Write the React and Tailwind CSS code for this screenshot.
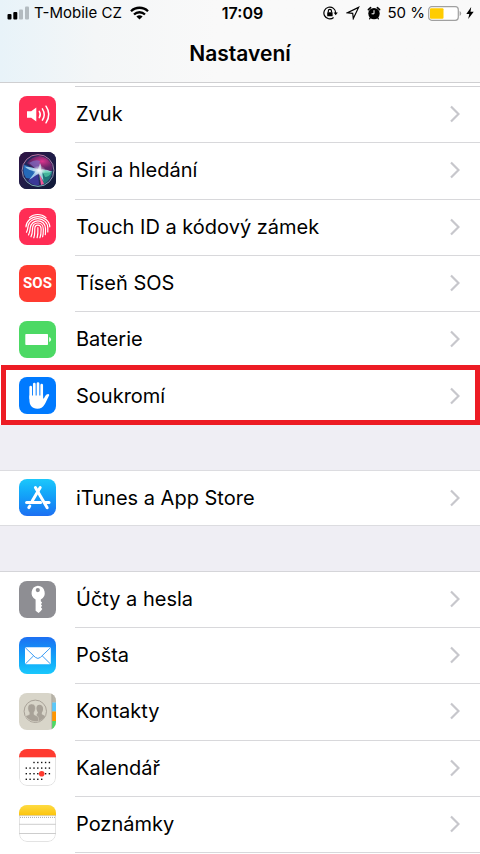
import clsx from 'clsx'

const PRIMARY = [
  { label: 'Zvuk', icon: SoundIcon },
  { label: 'Siri a hledání', icon: SiriIcon },
  { label: 'Touch ID a kódový zámek', icon: TouchIdIcon },
  { label: 'Tíseň SOS', icon: SosIcon },
  { label: 'Baterie', icon: BatteryIcon },
  { label: 'Soukromí', icon: PrivacyIcon, highlighted: true },
]

const STORE = [{ label: 'iTunes a App Store', icon: AppStoreIcon }]

const APPS = [
  { label: 'Účty a hesla', icon: KeyIcon },
  { label: 'Pošta', icon: MailIcon },
  { label: 'Kontakty', icon: ContactsIcon },
  { label: 'Kalendář', icon: CalendarIcon },
  { label: 'Poznámky', icon: NotesIcon },
]

export default function App() {
  return (
    <div className="min-h-screen bg-[#efeef4] font-['Inter','Noto_Sans',sans-serif] text-black">
      <header className="border-b border-[#cfcfd1] bg-[#f9f9f9] bg-linear-to-r from-[#e8f3f9] via-[#f4f6f7] via-20% to-[#f9f9f9] to-45%">
        <StatusBar />
        <h1 className="pt-[15px] pb-3.5 text-center text-[21px] leading-7 font-semibold">Nastavení</h1>
      </header>

      <main className="flex flex-col gap-[45px]">
        <div className="bg-white pt-[3px]">
          <div className="ml-[75px] border-t border-[#d2d2d5]" />
          <List items={PRIMARY} className="min-h-[338px]" />
        </div>
        <List items={STORE} className="min-h-14 border-y border-[#dcdce0]" />
        <div className="border-t border-[#d5d5d9] bg-white pb-px">
          <List items={APPS} className="min-h-[281px]" lastLine />
        </div>
      </main>
    </div>
  )
}

function List({ items, className, lastLine }) {
  return (
    <ul className={clsx('grid auto-rows-fr bg-white', className)}>
      {items.map((item, i) => (
        <Row key={item.label} {...item} line={lastLine || i < items.length - 1} />
      ))}
    </ul>
  )
}

function Row({ label, icon: Icon, highlighted, line }) {
  return (
    <li className="relative">
      <a href="#" className="flex h-full items-center pl-[19px]">
        <Icon />
        <span
          className={clsx(
            'ml-[19px] flex h-full flex-1 items-center justify-between pr-5 pb-px pl-px',
            line && 'border-b border-[#d8d8db]'
          )}
        >
          <span className="text-[20px] leading-6">{label}</span>
          <svg className="h-[18px] w-2.5" viewBox="0 0 10 18" fill="none" stroke="#c7c7cc" strokeWidth="2.2">
            <path d="M1 1.5 8.5 9 1 16.5" />
          </svg>
        </span>
      </a>
      {highlighted && (
        <span className="pointer-events-none absolute -top-1 right-0 bottom-0 left-px border-5 border-[#ed1c24]" />
      )}
    </li>
  )
}

function StatusBar() {
  return (
    <div className="grid grid-cols-[1fr_auto_1fr] items-center pt-px pr-1.5 pl-[7px] text-[15px] leading-6">
      <div className="flex items-center">
        <svg className="h-3.5 w-[23px]" viewBox="0 0 23 14">
          <rect x="0.5" y="8" width="4" height="5.5" rx="1" />
          <rect x="6.3" y="6" width="4" height="7.5" rx="1" />
          <rect x="12" y="3.5" width="4" height="10" rx="1" fill="#b3bbc0" />
          <rect x="18" y="0.5" width="4" height="13" rx="1" fill="#b3bbc0" />
        </svg>
        <span className="ml-1">T-Mobile CZ</span>
        <svg className="ml-2 h-3.5 w-[19px]" viewBox="0 0 19 14" fill="none" stroke="#000" strokeWidth="2.3">
          <path d="M1 5.2a12.2 12.2 0 0 1 17 0M4 8.5a7.9 7.9 0 0 1 11 0" />
          <path d="M9.5 13.5 6.4 10.6a4.6 4.6 0 0 1 6.2 0z" fill="#000" stroke="none" />
        </svg>
      </div>

      <time className="pl-1 text-base font-semibold">17:09</time>

      <div className="flex items-center justify-end">
        <svg className="h-3.5 w-[15px]" viewBox="0 0 15 14" fill="none" stroke="#000" strokeWidth="1.2">
          <path d="M10.6 11.5A5.9 5.9 0 1 1 12.7 7" />
          <path d="M10.6 6.5h4.2L12.7 9.3z" fill="#000" stroke="none" />
          <rect x="4.2" y="6.2" width="5.4" height="4" rx="0.5" fill="#000" stroke="none" />
          <path d="M5.3 6.4V5a1.6 1.6 0 0 1 3.2 0v1.4" />
        </svg>
        <svg className="ml-2 h-3.5 w-3.5" viewBox="0 0 14 14" fill="none" stroke="#000" strokeWidth="1.2">
          <path d="M12.6 1.4 1.5 6.8l5.2.5.6 5.2z" />
        </svg>
        <svg className="ml-[7px] h-3.5 w-3.5" viewBox="0 0 14 14">
          <circle cx="7" cy="7.6" r="5.7" />
          <path d="M1.4 3.6 3.6 1.6M12.6 3.6 10.4 1.6" stroke="#000" strokeWidth="1.6" strokeLinecap="round" />
          <path d="m3.6 11.4-1 1.4M10.4 11.4l1 1.4" stroke="#000" strokeWidth="1.2" strokeLinecap="round" />
          <path d="M7 4.2v3.6H4.6" stroke="#fff" strokeWidth="1" fill="none" />
        </svg>
        <span className="ml-1.5">50 %</span>
        <svg className="ml-[3px] h-[15px] w-[34px]" viewBox="0 0 34 15">
          <rect x="0.7" y="0.7" width="29.6" height="13.6" rx="3" fill="#fff" stroke="#a0a0a0" strokeWidth="1.2" />
          <rect x="2" y="2.2" width="13.5" height="10.6" rx="1" fill="#ffcc00" />
          <path d="M31.6 5v5q1.6-.8 1.6-2.5T31.6 5z" fill="#a0a0a0" />
        </svg>
        <svg className="ml-1 h-3 w-2" viewBox="0 0 8 12">
          <path d="M5.2 0 .3 6.9h3L2.2 12l5.5-7.3H4.5z" />
        </svg>
      </div>
    </div>
  )
}

function Tile({ className, children }) {
  return (
    <svg className={clsx('mb-0.5 size-[37px] shrink-0 rounded-lg', className)} viewBox="0 0 37 37" fill="none">
      {children}
    </svg>
  )
}

function SoundIcon() {
  return (
    <Tile className="bg-[#ff2d55]">
      <path d="M8 15.3h4.2l5.1-3.8v14l-5.1-3.8H8z" fill="#fff" />
      <g stroke="#fff" strokeWidth="1.5" strokeLinecap="round">
        <path d="M20.3 15.4q2 3.1 0 6.2" />
        <path d="M23.4 12.8q3.6 5.7 0 11.4" />
        <path d="M27 10.2q5.6 8.3 0 16.6" />
      </g>
    </Tile>
  )
}

function SiriIcon() {
  return (
    <Tile className="bg-[#1b1638]">
      <defs>
        <linearGradient id="siriBack" x1="0" y1="0" x2="1" y2="1">
          <stop offset="0" stopColor="#301343" />
          <stop offset="0.5" stopColor="#201d48" />
          <stop offset="1" stopColor="#0d1936" />
        </linearGradient>
        <radialGradient id="siriCore">
          <stop offset="0" stopColor="#fff" />
          <stop offset="0.35" stopColor="#fff" stopOpacity="0.6" />
          <stop offset="1" stopColor="#fff" stopOpacity="0" />
        </radialGradient>
        <radialGradient id="siriPink" cx="0.6" cy="0.35">
          <stop offset="0" stopColor="#e0358f" />
          <stop offset="1" stopColor="#b52578" stopOpacity="0.4" />
        </radialGradient>
        <linearGradient id="siriRing" x1="0" y1="0" x2="0" y2="1">
          <stop offset="0" stopColor="#bb6d9c" />
          <stop offset="1" stopColor="#76acb4" />
        </linearGradient>
      </defs>
      <rect width="37" height="37" fill="url(#siriBack)" />
      <circle cx="19" cy="18.5" r="15.8" fill="#25265b" />
      <path d="M19 18.5 8 11Q13 4 21 4q8 1 12 9 1 4-1 6z" fill="url(#siriPink)" />
      <path d="M19 18.5 10 11q6-4 11-2z" fill="#7a6fc4" opacity="0.7" />
      <path d="M19 18.5 5 12.5q-2 8 2 13.5l6 1z" fill="#2475c8" opacity="0.85" />
      <path d="M19 18.5 33.5 19q-1 9-9 13.5l-4-5z" fill="#1d9585" opacity="0.7" />
      <path d="M19 18.5 9 29q5 5 11 4z" fill="#423eb0" opacity="0.7" />
      <path d="M20 20 22 33l3-1z" fill="#ef5898" />
      <path d="M5.5 14.5q8 .5 13.5 2.5l2-6q2 3 1.2 6.4 5.800-.4 11 2.600-5 1-10 .5l1.300 8.500-4.800-7.500L10 28l6.500-8.500q-7-1-11-5z" fill="#c9f2ff" opacity="0.75" />
      <path d="M23 18.500q6-1 9 2.500-2 4-6 4z" fill="#5fe0b0" opacity="0.6" />
      <ellipse cx="20" cy="18.5" rx="7" ry="5" fill="url(#siriCore)" />
      <circle cx="19" cy="18.5" r="15.9" stroke="url(#siriRing)" strokeWidth="1" />
    </Tile>
  )
}

function TouchIdIcon() {
  return (
    <Tile className="bg-[#ff2d55]">
      <g stroke="#fff" strokeWidth="1.2" strokeLinecap="round">
        <path d="M10.5 9.6a12.5 12.5 0 0 1 16.5 0" />
        <path d="M7 18.8c.3-5.8 5.6-10.2 11.8-10.2S30.5 13 30.8 18.8" />
        <path d="M7.5 24.2c1.6-3.2 1.3-4.8 1.7-6.5 1-4.2 5-7 9.6-7 5.6 0 10 4 10 9.3v4" />
        <path d="M9.5 27c1.8-3.8 1.5-5.8 1.8-7.5.6-3.8 3.7-6.7 7.5-6.7 4.3 0 7.7 3.2 7.7 7.8 0 2.7.1 4-.2 6" />
        <path d="M12 28.8c1.7-4 1.4-5.6 1.5-8 .2-3.4 2.3-5.8 5.3-5.8 3.2 0 5.5 2.4 5.5 6 0 3.3.2 5-.7 7.8" />
        <path d="M14.8 29.8c1.4-4.2.8-6 1-9 .1-2.1 1.2-3.6 3-3.6s3.3 1.5 3.3 4c0 3.2.1 5.8-1.2 8.6" />
        <path d="M18.9 19.7c.2 4.2.2 6.8-.8 10" />
      </g>
    </Tile>
  )
}

function SosIcon() {
  return (
    <span className="mb-0.5 flex size-[37px] shrink-0 items-center justify-center rounded-lg bg-[#ff3b30] font-['Roboto',sans-serif] text-[15px] leading-6 font-bold text-white">
      SOS
    </span>
  )
}

function BatteryIcon() {
  return (
    <Tile className="bg-[#4cd964]">
      <rect x="6.3" y="13" width="22.7" height="11" rx="0.8" fill="#fff" />
      <path d="M30.2 16v5q1.8-.7 1.8-2.5T30.2 16z" fill="#fff" />
    </Tile>
  )
}

function PrivacyIcon() {
  return (
    <Tile className="bg-[#007aff]">
      <g stroke="#fff" strokeWidth="2.7" strokeLinecap="round">
        <path d="M11.7 10.2v11M15.3 7.2v13M19 6.6v13M22.7 8.2v13" />
      </g>
      <path
        d="M10.4 18.5h13.7v3.3c1-.4 1.5-1.7 2.2-2.8 1-1.5 2.3-2.2 3.4-1.8 1 .4.4 1.4-.1 2.3-1.4 2.5-2.4 5.6-4.2 8.3-1.7 2.6-3.5 3.9-7 3.9-5.5 0-8-3.5-8-8.9z"
        fill="#fff"
      />
    </Tile>
  )
}

function AppStoreIcon() {
  return (
    <Tile className="bg-linear-to-b from-[#1dc8fb] to-[#1d6ff2]">
      <g stroke="#fff" strokeWidth="3" strokeLinecap="round">
        <path d="M21.2 8.6 13.2 22" />
        <path d="M10.8 27 9.8 28.6" />
        <path d="M16.4 8.6 28.2 28.7" />
        <path d="M7.6 23.4h14" />
        <path d="M26 23.4h4" />
      </g>
    </Tile>
  )
}

function KeyIcon() {
  return (
    <Tile className="bg-[#8e8e93]">
      <path
        fillRule="evenodd"
        d="M18.8 4.8a7.2 7.2 0 0 1 3 13.6v1.9l1.3 1.3-1.1 1.7 1.1 1.4-1.2 1.6 1.4 1.8-1.5 2-2.2 2-3-2.4V18.4a7.2 7.2 0 0 1 2.2-13.6zm0 2.2a2.1 2.1 0 1 0 0 4.2 2.1 2.1 0 0 0 0-4.2z"
        fill="#fff"
      />
    </Tile>
  )
}

function MailIcon() {
  return (
    <Tile className="bg-linear-to-b from-[#1d6ff2] to-[#1ac8fc]">
      <rect x="6" y="10.3" width="25.8" height="17" rx="1.2" fill="#fff" />
      <g stroke="#3c9df5" strokeWidth="1">
        <path d="m6.3 10.7 10 9.6q2.6 2.3 5.2 0l10-9.6" />
        <path d="m6.3 27 8.4-8.3M31.5 27l-8.4-8.3" />
      </g>
    </Tile>
  )
}

function ContactsIcon() {
  return (
    <Tile className="bg-[#d8d5c9]">
      <rect x="33" width="4" height="9.5" fill="#b9b5aa" />
      <rect x="33" y="9.5" width="4" height="9" fill="#5ac8fa" />
      <rect x="33" y="18.5" width="4" height="9.5" fill="#ff9500" />
      <rect x="33" y="28" width="4" height="9" fill="#4cd964" />
      <path d="M32.8 0v37" stroke="#a8a49a" strokeWidth="0.8" />
      <circle cx="16.3" cy="18.3" r="11.2" stroke="#a8a298" strokeWidth="1" />
      <path
        d="M20.4 11.8c2.5 0 3.8 1.7 3.7 4.2-.1 2-.7 2.8-1.3 3.7v1.6l3.3 1.6c-1.5 2.7-4.4 4.8-7.3 5.3l-1.2-6.6 1.4-1.9c-2.3-3.3-2.2-7.9 1.4-7.9z"
        fill="#a8a298"
      />
      <path
        d="M12.6 11c2.8 0 4 1.9 3.8 4.6-.1 1.8-.7 3-1.4 3.9v2l3.8 2q.8.6.8 4.8c-5.2 1.2-10.6-1-13.1-5.2l3.8-1.6v-2c-.8-1-1.3-2.1-1.4-3.9-.2-2.7.9-4.6 3.7-4.6z"
        fill="#a8a298"
        stroke="#d8d5c9"
        strokeWidth="0.5"
      />
    </Tile>
  )
}

const DOT_COLS = [7.3, 11.1, 15, 18.8, 22.7, 26.6, 30.4]
const DOT_ROWS = [
  { y: 13.5, from: 2, to: 6 },
  { y: 19.1, from: 0, to: 6 },
  { y: 24.7, from: 0, to: 6 },
  { y: 30.3, from: 0, to: 4 },
]

function CalendarIcon() {
  return (
    <Tile className="bg-white">
      <rect x="0.5" y="0.5" width="36" height="36" rx="7.5" stroke="#e3e3e3" />
      <rect width="37" height="8.3" fill="#ff3b30" />
      {DOT_ROWS.map(({ y, from, to }) =>
        DOT_COLS.slice(from, to + 1).map((x) => (
          <rect key={`${x}-${y}`} x={x - 0.7} y={y - 0.7} width="1.4" height="1.4" fill="#111" />
        ))
      )}
      <circle cx="22.7" cy="24.8" r="2.8" fill="#ff3b30" />
    </Tile>
  )
}

function NotesIcon() {
  return (
    <Tile className="bg-white">
      <defs>
        <linearGradient id="notesTop" x1="0" y1="0" x2="0" y2="1">
          <stop offset="0" stopColor="#fedb42" />
          <stop offset="1" stopColor="#fcc40c" />
        </linearGradient>
      </defs>
      <rect x="0.5" y="0.5" width="36" height="36" rx="7.5" stroke="#e3e3e3" />
      <rect width="37" height="10.3" fill="url(#notesTop)" />
      <path d="M0 10.6h37" stroke="#cbb981" strokeWidth="0.6" />
      <path d="M1 12.4h35" stroke="#aaa" strokeWidth="1" strokeDasharray="1 1" />
      <path d="M0 19.3h37M0 28.5h37" stroke="#cdcdcd" strokeWidth="1" />
    </Tile>
  )
}
